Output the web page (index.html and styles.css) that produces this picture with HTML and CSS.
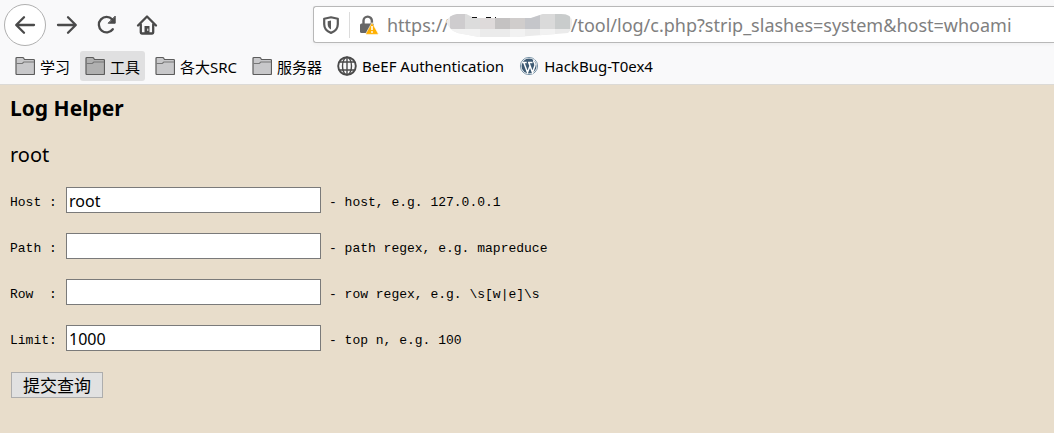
FILE: index.html
```html
<!DOCTYPE html>
<html lang="zh-CN">
<head>
<meta charset="utf-8">
<title>Log Helper</title>
<link rel="stylesheet" href="styles.css">
</head>
<body>
<svg width="0" height="0" class="defs" aria-hidden="true">
  <symbol id="folder" viewBox="0 0 20 20">
    <path d="M1 17.500V2.500q0-1 1-1h5.500q1 0 1.300.8l.7 1.200H18.500q1 0 1 1v13q0 1-1 1H2q-1 0-1-1z" fill="currentColor" stroke="#5c5c5c" stroke-width="1.200"/>
    <path d="M1.500 7.500h5.800l1.500-1.500h10.200" fill="none" stroke="#777" stroke-width="1.100"/>
  </symbol>
</svg>
<header class="chrome">
  <div class="toolbar">
    <nav class="nav">
      <button class="icon-btn back" aria-label="Back"><svg class="stroke" width="22" height="22" viewBox="0 0 22 22"><path d="M20 11H2.500M10 3.200L2.200 11l7.800 7.800"/></svg></button>
      <button class="icon-btn" aria-label="Forward"><svg class="stroke" width="22" height="22" viewBox="0 0 22 22"><path d="M2 11h17.500M12 3.200l7.800 7.800-7.800 7.800"/></svg></button>
      <button class="icon-btn" aria-label="Reload"><svg class="stroke" width="22" height="22" viewBox="0 0 22 22"><path d="M16.800 15.200A7.700 7.700 0 1 1 16.200 5.400"/><path class="solid" d="M19.200 2.500v6.700h-6.700z"/></svg></button>
      <button class="icon-btn" aria-label="Home"><svg class="stroke" width="22" height="22" viewBox="0 0 22 22"><path d="M2 11.500l9-9 9 9M4.800 10.500v8q0 1 1 1h10.400q1 0 1-1v-8"/><path d="M8.500 19.500V12h5v7.500z" class="door"/><path d="M11.800 15v1.500" class="knob"/></svg></button>
    </nav>
    <div class="address">
      <svg class="shield" width="18" height="20" viewBox="0 0 18 20"><path d="M9 2.300l6.800 1.500v5.500q0 6.200-6.800 8.600Q2.200 15.500 2.200 9.300V3.800z" fill="none" stroke="#5a5a5a" stroke-width="2.200" stroke-linejoin="round"/><path d="M9 5.600v8.800Q5.700 12.800 5.700 9.300V6.300z" fill="#5a5a5a"/></svg>
      <span class="divider"></span>
      <svg class="lock" width="20" height="20" viewBox="0 0 20 20"><path d="M4.500 9V5.800a4.200 4.200 0 0 1 8.400 0V9" fill="none" stroke="#666" stroke-width="2.400"/><rect x="1" y="8.500" width="14" height="9.500" rx="1.500" fill="#666"/><path d="M13 7.500l6 10.700q.4 1.200-.8 1.200H7.800q-1.200 0-.8-1.200z" fill="#ffb000" stroke="#fff" stroke-width=".6"/><path d="M13 11v4" stroke="#fff" stroke-width="1.600"/><circle cx="13" cy="17" r=".9" fill="#fff"/></svg>
      <div class="url">
        <input class="url-input" type="text" aria-label="Address" value="https://&nbsp;&nbsp;&nbsp;&nbsp;&nbsp;&nbsp;&nbsp;&nbsp;&nbsp;&nbsp;&nbsp;&nbsp;&nbsp;&nbsp;&nbsp;&nbsp;&nbsp;&nbsp;&nbsp;&nbsp;&nbsp;&nbsp;&nbsp;&nbsp;&nbsp;&nbsp;/tool/log/c.php?strip_slashes=system&amp;host=whoami">
        <svg class="mosaic" width="130" height="26" viewBox="0 0 130 26">
          <clipPath id="blot"><path d="M1 9Q4 2 12 1h9l8 4h57l12-4h18q11 0 11 8t-4 11l-12 1-40 3H34l-16-3Q6 20 1 9z"/></clipPath>
          <g clip-path="url(#blot)">
            <path d="M0 0h130v26H0z" fill="#ebebeb"/>
            <path d="M5 0h15v16H5z" fill="#ceccce"/><path d="M20 0h15v16H20z" fill="#dcdcdc"/><path d="M35 0h15v16H35z" fill="#dedada"/><path d="M50 0h15v16H50z" fill="#c4c2c2"/><path d="M65 0h15v16H65z" fill="#d0cdcc"/><path d="M80 0h15v16H80z" fill="#c5c6ca"/><path d="M95 0h15v16H95z" fill="#dadada"/><path d="M110 0h15v16H110z" fill="#c9cccc"/>
            <path d="M0 16h35v10H0zM65 16h15v10H65zM95 16h15v10H95z" fill="#f2f2f2"/>
          </g>
          <path d="M27 4.500h5M41 4.500h5M50 4.500h1" stroke="#111"/>
        </svg>
      </div>
    </div>
  </div>
  <nav class="bookmarks">
    <a class="bookmark" href="#"><svg class="folder" width="20" height="20"><use href="#folder"/></svg>学习</a>
    <a class="bookmark active" href="#"><svg class="folder" width="20" height="20"><use href="#folder"/></svg>工具</a>
    <a class="bookmark" href="#"><svg class="folder" width="20" height="20"><use href="#folder"/></svg>各大SRC</a>
    <a class="bookmark" href="#"><svg class="folder" width="20" height="20"><use href="#folder"/></svg>服务器</a>
    <a class="bookmark" href="#"><svg width="20" height="20" viewBox="0 0 20 20" fill="none" stroke="#4a4a4a" stroke-width="1.400"><circle cx="10" cy="10" r="8.800" stroke-width="1.900"/><ellipse cx="10" cy="10" rx="4.500" ry="8.800"/><path d="M10 1v18M2.500 6h15M2.500 14h15" /></svg>BeEF Authentication</a>
    <a class="bookmark" href="#"><svg width="20" height="20" viewBox="0 0 20 20"><circle cx="10" cy="10" r="8.600" fill="#fff" stroke="#7b95a8" stroke-width="1"/><circle cx="10" cy="10" r="7.500" fill="#3d5a73"/><path d="M3.200 6.500h4.500M9 6.500h4.500M4.800 6.500l3.700 10L11 10M9.800 6.500l3.700 10 2.300-6.500q.7-2.500-.8-4-.8-1.500.8-2" fill="none" stroke="#fff" stroke-width="1.500"/></svg>HackBug-T0ex4</a>
  </nav>
</header>
<main class="page">
  <h1 class="title">Log Helper</h1>
  <p class="result">root</p>
  <form class="form">
    <div class="row"><label class="label" for="host">Host :</label><input class="field" id="host" type="text" value="root"><span class="hint">- host, e.g. 127.0.0.1</span></div>
    <div class="row"><label class="label" for="path">Path :</label><input class="field" id="path" type="text"><span class="hint">- path regex, e.g. mapreduce</span></div>
    <div class="row"><label class="label" for="row">Row&nbsp; :</label><input class="field" id="row" type="text"><span class="hint">- row regex, e.g. \s[w|e]\s</span></div>
    <div class="row"><label class="label" for="limit">Limit:</label><input class="field" id="limit" type="text" value="1000"><span class="hint">- top n, e.g. 100</span></div>
    <button class="submit" type="button">提交查询</button>
  </form>
</main>
</body>
</html>
```
FILE: styles.css
```css
* { box-sizing: border-box; }
body {
  margin: 0;
  min-height: 100vh;
  background: #e8ddcb;
  color: #000;
  font-family: "Noto Sans", "Noto Sans CJK SC", sans-serif;
}
.defs { position: absolute; }
.chrome {
  background: #f9f9fa;
  border-bottom: 1px solid #dcdad6;
}
.toolbar {
  display: flex;
  align-items: center;
  height: 49px;
  padding-left: 4px;
}
.nav { display: flex; align-items: center; gap: 2px; flex: none; }
.icon-btn {
  display: flex;
  align-items: center;
  justify-content: center;
  width: 38px;
  height: 38px;
  padding: 0;
  border: 0;
  background: none;
}
.stroke {
  fill: none;
  stroke: #4a4a4a;
  stroke-width: 2.3;
  stroke-linecap: round;
  stroke-linejoin: round;
}
.solid { fill: #4a4a4a; stroke-width: 1; }
.door { fill: #4a4a4a; stroke: none; }
.knob { stroke: #fff; stroke-width: 1; }
.back {
  width: 42px;
  height: 42px;
  border: 1px solid #b0b0b0;
  border-radius: 50%;
  background: #fff;
}
.address {
  display: flex;
  align-items: center;
  flex: 1;
  min-width: 0;
  height: 37px;
  margin-left: 147px;
  padding-left: 8px;
  border: 1px solid #b8b8b8;
  border-right: 0;
  border-radius: 3px 0 0 3px;
  background: #fff;
  box-shadow: 0 1px 4px #0000000d;
}
.shield, .lock { flex: none; }
.divider { width: 1px; height: 26px; margin: 0 9px; background: #dcdcdc; }
.url { position: relative; flex: 1; min-width: 0; margin-left: 8px; }
.url-input {
  display: block;
  width: 100%;
  padding: 0;
  border: 0;
  outline: 0;
  background: none;
  color: #808080;
  font: 18px/30px "Noto Sans", sans-serif;
}
.mosaic { position: absolute; left: 58px; top: 3px; }
.bookmarks {
  display: flex;
  align-items: center;
  gap: 5px;
  height: 35px;
  padding: 0 0 1px 10px;
}
.bookmark {
  display: flex;
  align-items: center;
  gap: 5px;
  height: 30px;
  padding: 0 5px;
  border-radius: 3px;
  color: #000;
  font-size: 15px;
  text-decoration: none;
  white-space: nowrap;
}
.folder { color: #c8c8ca; }
.active { background: #e0e0e1; }
.active .folder { color: #b0b0b0; }
.page { padding: 7px 10px; }
.title { margin: 0; font-size: 21px; line-height: 32px; }
.result { margin: 15px 0 16px; font-size: 20px; line-height: 32px; }
.form { display: flex; flex-direction: column; align-items: flex-start; gap: 20px; }
.row {
  display: flex;
  align-items: center;
  font-family: "Liberation Mono", monospace;
  font-size: 13px;
}
.label { width: 56px; padding-top: 4px; white-space: pre; }
.hint { margin-left: 8px; padding-top: 4px; }
.field {
  width: 255px;
  height: 26px;
  padding: 1px 2px 0;
  border: 1px solid #7a7a7a;
  background: #fff;
  font: 16px "Noto Sans", sans-serif;
}
.submit {
  height: 26px;
  margin: 1px 0 0 1px;
  padding: 0 11px;
  border: 1px solid #adadad;
  background: #e1e1e1;
  color: #000;
  font: 17px/24px "Noto Sans CJK SC", sans-serif;
}
```
